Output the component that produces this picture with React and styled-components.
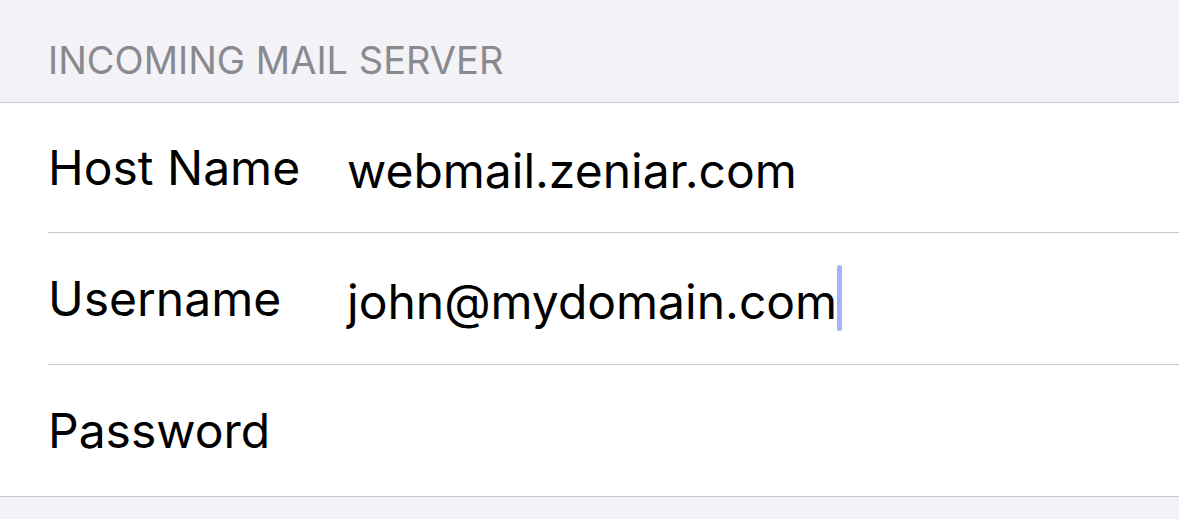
import React from "react";
import styled, { createGlobalStyle } from "styled-components";

const GlobalStyle = createGlobalStyle`
  html, body {
    margin: 0;
    padding: 0;
    background: #f2f2f7;
    font-family: Inter, "Liberation Sans", sans-serif;
    -webkit-font-smoothing: antialiased;
  }
`;

const Page = styled.div`
  width: 1179px;
  height: 519px;
  overflow: hidden;
  background: #f2f2f7;
`;

const SectionHeader = styled.div`
  height: 103px;
  box-sizing: border-box;
  padding: 37px 0 0 48px;
  color: #8a8a8e;
  font-size: 38px;
  line-height: 46px;
  letter-spacing: 0;
  border-bottom: 1px solid #c8c7cc;
`;

const List = styled.div`
  background: #fff;
  border-bottom: 1px solid #c8c7cc;
`;

const Row = styled.div`
  display: flex;
  align-items: center;
  height: ${(p) => (p.$first ? "129px" : "131px")};
  margin-left: 48px;
  border-bottom: ${(p) => (p.$last ? "none" : "1px solid #c8c7cc")};
`;

const Label = styled.div`
  width: 299px;
  flex-shrink: 0;
  font-size: 48px;
  color: #000;
`;

const Value = styled.div`
  display: flex;
  align-items: center;
  font-size: 48px;
  color: #000;
  margin-top: 6px;
`;

const Caret = styled.span`
  display: inline-block;
  width: 5px;
  height: 66px;
  border-radius: 3px;
  background: #a0b4f7;
  margin-left: 0;
  margin-top: -8px;
`;

const fields = [
  { label: "Host Name", value: "webmail.zeniar.com" },
  { label: "Username", value: "john@mydomain.com", focused: true },
  { label: "Password", value: "" },
];

export default function App() {
  return (
    <Page>
      <GlobalStyle />
      <SectionHeader>INCOMING MAIL SERVER</SectionHeader>
      <List>
        {fields.map((f, i) => (
          <Row
            key={f.label}
            $first={i === 0}
            $last={i === fields.length - 1}
          >
            <Label>{f.label}</Label>
            <Value>
              {f.value}
              {f.focused && <Caret />}
            </Value>
          </Row>
        ))}
      </List>
    </Page>
  );
}
